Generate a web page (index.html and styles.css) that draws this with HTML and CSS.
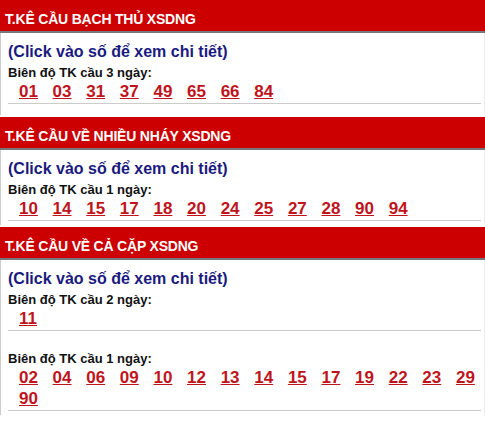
FILE: index.html
```html
<!DOCTYPE html>
<html lang="vi">
<head>
    <meta charset="UTF-8">
    <meta name="viewport" content="width=device-width, initial-scale=1.0">
    <title>Thống kê cầu XSDNG</title>
    <link rel="stylesheet" href="styles.css">
</head>
<body>
    <div class="block">
        <h3 class="block-title">T.KÊ CẦU BẠCH THỦ XSDNG</h3>
        <div class="block-body block-body-first">
            <div class="hint">(Click vào số để xem chi tiết)</div>
            <div class="group">
                <div class="label">Biên độ TK cầu 3 ngày:</div>
                <div class="nums">
                    <a href="#">01</a><a href="#">03</a><a href="#">31</a><a href="#">37</a>
                    <a href="#">49</a><a href="#">65</a><a href="#">66</a><a href="#">84</a>
                </div>
            </div>
        </div>
    </div>

    <div class="block">
        <h3 class="block-title">T.KÊ CẦU VỀ NHIỀU NHÁY XSDNG</h3>
        <div class="block-body">
            <div class="hint">(Click vào số để xem chi tiết)</div>
            <div class="group">
                <div class="label">Biên độ TK cầu 1 ngày:</div>
                <div class="nums">
                    <a href="#">10</a><a href="#">14</a><a href="#">15</a><a href="#">17</a>
                    <a href="#">18</a><a href="#">20</a><a href="#">24</a><a href="#">25</a>
                    <a href="#">27</a><a href="#">28</a><a href="#">90</a><a href="#">94</a>
                </div>
            </div>
        </div>
    </div>

    <div class="block">
        <h3 class="block-title">T.KÊ CẦU VỀ CẢ CẶP XSDNG</h3>
        <div class="block-body">
            <div class="hint">(Click vào số để xem chi tiết)</div>
            <div class="group">
                <div class="label">Biên độ TK cầu 2 ngày:</div>
                <div class="nums">
                    <a href="#">11</a>
                </div>
            </div>
            <div class="group group-next">
                <div class="label">Biên độ TK cầu 1 ngày:</div>
                <div class="nums">
                    <a href="#">02</a><a href="#">04</a><a href="#">06</a><a href="#">09</a>
                    <a href="#">10</a><a href="#">12</a><a href="#">13</a><a href="#">14</a>
                    <a href="#">15</a><a href="#">17</a><a href="#">19</a><a href="#">22</a>
                    <a href="#">23</a><a href="#">29</a><a href="#">90</a>
                </div>
            </div>
        </div>
    </div>
</body>
</html>
```

FILE: styles.css
```css
body {
    font-family: Arial, "Liberation Sans", sans-serif;
    margin: 0;
    width: 485px;
    background: #fff;
}

.block {
    margin-bottom: 2px;
}

.block-title {
    margin: 0;
    height: 20px;
    padding: 9px 0 2px 5px;
    line-height: 20px;
    font-size: 14px;
    font-weight: bold;
    letter-spacing: -0.2px;
    color: #fff;
    background-color: #cc0000;
    border-bottom: 2px solid #777;
}

.block-body {
    border-left: 1px solid #ccc;
    border-right: 1px solid #eee;
    padding: 9px 3px 4px 7px;
}

.block-body-first {
    padding-bottom: 11px;
}

.hint {
    font-size: 16px;
    font-weight: bold;
    line-height: 20px;
    color: #1a1a80;
}

.group {
    margin-top: 3px;
    border-bottom: 1px solid #ccc;
}

.group-next {
    margin-top: 20px;
}

.label {
    font-size: 13px;
    font-weight: bold;
    line-height: 16px;
    color: #111;
}

.nums {
    display: flex;
    flex-wrap: wrap;
    column-gap: 14.7px;
    padding: 0 0 1px 11px;
    line-height: 21px;
}

.nums a {
    font-size: 17px;
    font-weight: bold;
    color: #c0141c;
    text-decoration: underline;
}
```
